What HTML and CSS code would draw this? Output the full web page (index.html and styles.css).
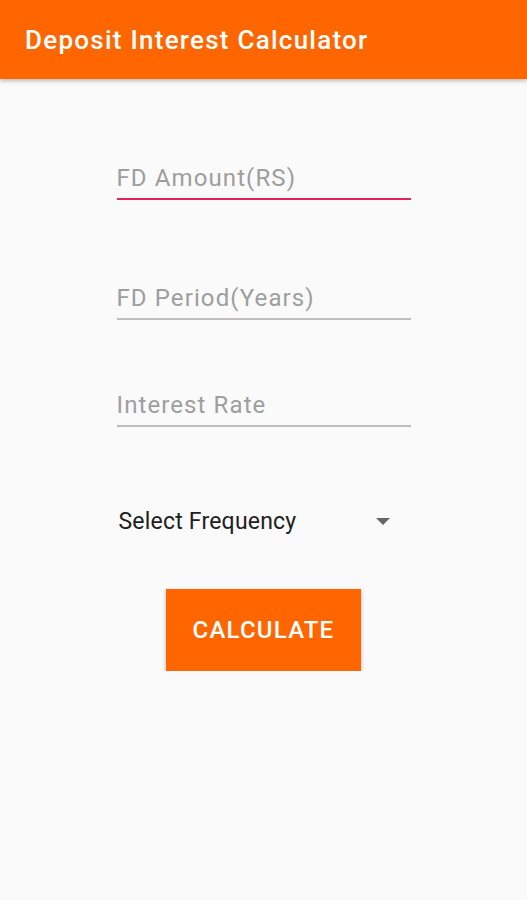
FILE: index.html
```html
<!DOCTYPE html>
<html lang="en">
<head>
  <meta charset="UTF-8">
  <meta name="viewport" content="width=device-width, initial-scale=1.0">
  <title>Deposit Interest Calculator</title>
  <link rel="stylesheet" href="styles.css">
</head>
<body>
  <header class="appbar">
    <h1 class="appbar-title">Deposit Interest Calculator</h1>
  </header>

  <form class="calc-form" id="calcForm">
    <input class="field field-amount field-focused" type="text" placeholder="FD Amount(RS)">
    <input class="field field-period" type="text" placeholder="FD Period(Years)">
    <input class="field field-rate" type="text" placeholder="Interest Rate">

    <div class="select-row">
      <span class="select-label">Select Frequency</span>
      <span class="select-arrow"></span>
    </div>

    <button class="calc-btn" type="submit">CALCULATE</button>
  </form>
</body>
</html>
```

FILE: styles.css
```css
body {
  margin: 0;
  background: #fafafa;
  font-family: Roboto, "Noto Sans", Arial, sans-serif;
}
.appbar {
  height: 79px;
  background: #ff6600;
  display: flex;
  align-items: center;
  padding-left: 25px;
  box-shadow: 0 2px 4px rgba(0, 0, 0, 0.25);
}
.appbar-title {
  margin: 0;
  color: #fff;
  font-size: 26px;
  font-weight: 500;
  letter-spacing: 1.25px;
}
.calc-form {
  width: 294px;
  margin: 0 auto;
  display: flex;
  flex-direction: column;
}
.field {
  font-family: inherit;
  font-size: 24px;
  letter-spacing: 1.1px;
  line-height: 28px;
  height: 28px;
  padding: 0 0 6px 0;
  border: none;
  border-bottom: 2px solid #bdbdbd;
  background: transparent;
  outline: none;
  color: #212121;
  box-sizing: content-box;
}
.field::placeholder {
  color: #9e9e9e;
}
.field-focused {
  border-bottom-color: #e2235a;
}
.field-amount {
  margin-top: 85px;
}
.field-period {
  margin-top: 84px;
}
.field-rate {
  margin-top: 71px;
}
.select-row {
  margin-top: 82px;
  display: flex;
  align-items: center;
  justify-content: space-between;
  padding: 0 21px 0 2px;
  height: 24px;
}
.select-label {
  font-size: 23px;
  letter-spacing: 0.2px;
  color: #212121;
}
.select-arrow {
  width: 0;
  height: 0;
  border-left: 7px solid transparent;
  border-right: 7px solid transparent;
  border-top: 7px solid #666;
}
.calc-btn {
  align-self: center;
  margin-top: 56px;
  width: 195px;
  height: 82px;
  background: #ff6600;
  color: #fff;
  border: none;
  font-family: inherit;
  font-size: 24px;
  font-weight: 500;
  letter-spacing: 1.2px;
  box-shadow: 0 2px 4px rgba(0, 0, 0, 0.3);
  cursor: pointer;
}
```
